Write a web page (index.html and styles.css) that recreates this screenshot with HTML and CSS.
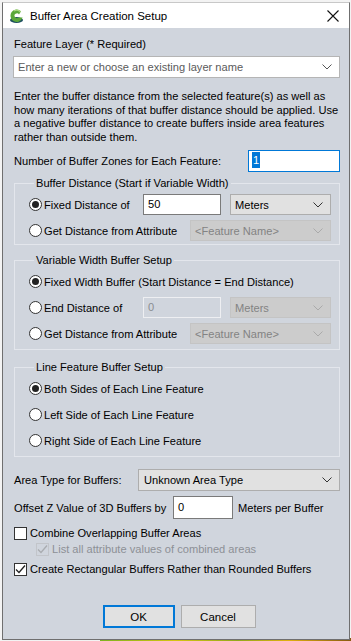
FILE: index.html
```html
<!DOCTYPE html>
<html lang="en">
<head>
    <meta charset="UTF-8">
    <title>Buffer Area Creation Setup</title>
    <link rel="stylesheet" href="styles.css">
</head>
<body>
    <div class="window">
        <div class="titlebar">
            <svg class="app-icon" width="16" height="16" viewBox="0 0 16 16">
                <ellipse cx="8.5" cy="12" rx="6.5" ry="3" fill="#1d4f5e"/>
                <path d="M13 3.2 A6.2 6.2 0 1 0 14.6 9.6 L10.4 9.6 A2.4 2.4 0 1 1 11 6.4 Z" fill="#5aa83a"/>
                <path d="M6 3 A5 5 0 0 1 12.5 4" stroke="#a8d87e" stroke-width="1.2" fill="none"/>
            </svg>
            <span class="title">Buffer Area Creation Setup</span>
            <svg class="close" width="12" height="12" viewBox="0 0 12 12">
                <path d="M0.5 0.5 L11.5 11.5 M11.5 0.5 L0.5 11.5" stroke="#111" stroke-width="1.1"/>
            </svg>
        </div>
        <div class="content">
            <div class="label-top">Feature Layer (* Required)</div>
            <div class="combo wide">
                <span class="placeholder">Enter a new or choose an existing layer name</span>
                <svg class="chev" width="10" height="6" viewBox="0 0 10 6"><path d="M0.5 0.5 L5 5 L9.5 0.5" stroke="#555" fill="none"/></svg>
            </div>
            <p class="intro">Enter the buffer distance from the selected feature(s) as well as<br>how many iterations of that buffer distance should be applied. Use<br>a negative buffer distance to create buffers inside area features<br>rather than outside them.</p>
            <div class="row zones">
                <span class="zones-label">Number of Buffer Zones for Each Feature:</span>
                <div class="textbox focused"><span class="sel">1</span></div>
            </div>

            <fieldset class="group g1">
                <legend>Buffer Distance (Start if Variable Width)</legend>
                <div class="opt">
                    <label class="radio w-short"><span class="dot on"></span>Fixed Distance of</label>
                    <div class="textbox dist">50</div>
                    <div class="combo units"><span>Meters</span>
                        <svg class="chev" width="10" height="6" viewBox="0 0 10 6"><path d="M0.5 0.5 L5 5 L9.5 0.5" stroke="#333" fill="none"/></svg>
                    </div>
                </div>
                <div class="opt">
                    <label class="radio w-long"><span class="dot"></span>Get Distance from Attribute</label>
                    <div class="combo attr disabled"><span>&lt;Feature Name&gt;</span>
                        <svg class="chev" width="10" height="6" viewBox="0 0 10 6"><path d="M0.5 0.5 L5 5 L9.5 0.5" stroke="#aaa" fill="none"/></svg>
                    </div>
                </div>
            </fieldset>

            <fieldset class="group g2">
                <legend>Variable Width Buffer Setup</legend>
                <div class="opt">
                    <label class="radio"><span class="dot on"></span>Fixed Width Buffer (Start Distance = End Distance)</label>
                </div>
                <div class="opt">
                    <label class="radio w-short"><span class="dot"></span>End Distance of</label>
                    <div class="textbox dist disabled">0</div>
                    <div class="combo units disabled"><span>Meters</span>
                        <svg class="chev" width="10" height="6" viewBox="0 0 10 6"><path d="M0.5 0.5 L5 5 L9.5 0.5" stroke="#aaa" fill="none"/></svg>
                    </div>
                </div>
                <div class="opt">
                    <label class="radio w-long"><span class="dot"></span>Get Distance from Attribute</label>
                    <div class="combo attr disabled"><span>&lt;Feature Name&gt;</span>
                        <svg class="chev" width="10" height="6" viewBox="0 0 10 6"><path d="M0.5 0.5 L5 5 L9.5 0.5" stroke="#aaa" fill="none"/></svg>
                    </div>
                </div>
            </fieldset>

            <fieldset class="group g3">
                <legend>Line Feature Buffer Setup</legend>
                <div class="opt"><label class="radio"><span class="dot on"></span>Both Sides of Each Line Feature</label></div>
                <div class="opt"><label class="radio"><span class="dot"></span>Left Side of Each Line Feature</label></div>
                <div class="opt"><label class="radio"><span class="dot"></span>Right Side of Each Line Feature</label></div>
            </fieldset>

            <div class="row area">
                <span class="area-label">Area Type for Buffers:</span>
                <div class="combo area-type"><span>Unknown Area Type</span>
                    <svg class="chev" width="10" height="6" viewBox="0 0 10 6"><path d="M0.5 0.5 L5 5 L9.5 0.5" stroke="#333" fill="none"/></svg>
                </div>
            </div>
            <div class="row offset">
                <span class="offset-label">Offset Z Value of 3D Buffers by</span>
                <div class="textbox zval">0</div>
                <span class="unit-text">Meters per Buffer</span>
            </div>

            <label class="check c1"><span class="box"></span>Combine Overlapping Buffer Areas</label>
            <label class="check c2 disabled"><span class="box checked">
                <svg width="11" height="11" viewBox="0 0 11 11"><path d="M1 5.5 L4 8.5 L10 1.5" stroke="#a9acb0" stroke-width="1.3" fill="none"/></svg>
            </span>List all attribute values of combined areas</label>
            <label class="check c3"><span class="box checked">
                <svg width="11" height="11" viewBox="0 0 11 11"><path d="M1 5.5 L4 8.5 L10 1.5" stroke="#222" stroke-width="1.3" fill="none"/></svg>
            </span>Create Rectangular Buffers Rather than Rounded Buffers</label>

            <div class="buttons">
                <button class="btn default">OK</button>
                <button class="btn cancel">Cancel</button>
            </div>
        </div>
    </div>
    <div class="map-strip"></div>
</body>
</html>
```

FILE: styles.css
```css
body {
    margin: 0;
    padding: 0;
    width: 351px;
    height: 641px;
    overflow: hidden;
    background-color: #f3f3f3;
    font-family: "Liberation Sans", Arial, sans-serif;
    font-size: 11.1px;
    color: #000;
    position: relative;
}
.window {
    margin: 2px 0 0 2px;
    width: 346px;
    height: 636px;
    border: 1px solid #6f6f6f;
    border-top-color: #c8c8c8;
    background-color: #d0d5dd;
    position: relative;
    z-index: 1;
    overflow: hidden;
}
.titlebar {
    height: 25px;
    background-color: #fff;
    display: flex;
    align-items: center;
}
.app-icon {
    margin-left: 5px;
    margin-right: 6px;
}
.title {
    flex: 1;
    font-size: 11.5px;
    color: #000;
}
.close {
    margin-right: 10px;
}
.content {
    padding: 0 9px 0 11px;
    white-space: nowrap;
}
.label-top {
    margin-top: 9px;
    line-height: 15px;
}
.combo {
    height: 21px;
    box-sizing: border-box;
    border: 1px solid #adadad;
    background-color: #e1e1e1;
    display: flex;
    align-items: center;
    justify-content: space-between;
    padding: 0 7px 0 4px;
    flex-shrink: 0;
}
.combo.wide {
    margin-top: 4px;
    margin-left: -1px;
    height: 22px;
    background-color: #fff;
    border-color: #b5b5b5;
}
.placeholder {
    color: #5a5a5a;
}
.combo.disabled {
    background-color: #cccccc;
    border-color: #c4c4c4;
    color: #838383;
}
.intro {
    margin: 12px 0 0 0;
    line-height: 13.6px;
}
.row {
    display: flex;
    align-items: center;
}
.zones {
    margin-top: 6px;
    height: 22px;
}
.zones-label {
    width: 234px;
}
.textbox {
    height: 21px;
    box-sizing: border-box;
    border: 1px solid #7a7a7a;
    background-color: #fff;
    padding: 1px 4px 0 4px;
    display: flex;
    align-items: flex-start;
    line-height: 16px;
    flex-shrink: 0;
}
.textbox.focused {
    width: 92px;
    height: 22px;
    border-color: #0078d7;
    padding-left: 3px;
}
.sel {
    background-color: #0078d7;
    color: #fff;
    padding: 0 1px;
}
.group {
    margin: 0;
    padding: 0 0 0 14px;
    border: 1px solid #e3e6ec;
    min-width: 0;
}
.group legend {
    padding: 0 2px;
    margin-left: 5px;
    line-height: 15px;
}
.g1 {
    margin-top: 4px;
    padding-top: 3px;
    padding-bottom: 3px;
}
.g2 {
    margin-top: 8px;
    padding-top: 3px;
    padding-bottom: 5px;
}
.g3 {
    margin-top: 10px;
    padding-top: 3px;
    padding-bottom: 5px;
}
.opt {
    height: 21px;
    display: flex;
    align-items: center;
}
.opt + .opt {
    margin-top: 5px;
}
.radio {
    display: flex;
    align-items: center;
    flex-shrink: 0;
}
.w-short {
    width: 114px;
}
.w-long {
    width: 161px;
}
.dot {
    width: 13px;
    height: 13px;
    box-sizing: border-box;
    border: 1px solid #333;
    border-radius: 50%;
    background-color: #fff;
    margin-right: 2px;
    display: flex;
    align-items: center;
    justify-content: center;
    flex-shrink: 0;
}
.dot.on::after {
    content: "";
    width: 7px;
    height: 7px;
    border-radius: 50%;
    background-color: #222;
}
.textbox.dist {
    width: 78px;
    margin-right: 9px;
}
.textbox.dist.disabled {
    background-color: #d0d5dd;
    border-color: #eeeff2;
    color: #8a8d92;
}
.combo.units {
    width: 101px;
}
.combo.attr {
    width: 141px;
}
.area {
    margin-top: 12px;
    height: 22px;
}
.area-label {
    width: 124px;
}
.combo.area-type {
    width: 202px;
    height: 22px;
    padding-left: 5px;
}
.offset {
    margin-top: 5px;
    height: 23px;
}
.offset-label {
    width: 159px;
}
.textbox.zval {
    width: 60px;
    height: 23px;
    padding-top: 2px;
    margin-right: 5px;
}
.check {
    display: flex;
    align-items: center;
    height: 16px;
}
.box {
    width: 13px;
    height: 13px;
    box-sizing: border-box;
    border: 1px solid #333;
    background-color: #fff;
    margin-right: 3px;
    display: flex;
    align-items: center;
    justify-content: center;
    flex-shrink: 0;
}
.c1 {
    margin-top: 6px;
}
.c2 {
    margin-left: 22px;
    color: #8d9096;
}
.c2 .box {
    border-color: #c2c5ca;
    background-color: #d0d5dd;
}
.c3 {
    margin-top: 4px;
}
.buttons {
    margin-top: 28px;
    display: flex;
    justify-content: center;
    gap: 6px;
    padding-left: 4px;
}
.btn {
    height: 23px;
    box-sizing: border-box;
    font-family: inherit;
    font-size: 11.5px;
    background-color: #e1e1e1;
    border: 1px solid #adadad;
    padding: 0;
    color: #000;
}
.btn.default {
    width: 72px;
    border: 2px solid #0078d7;
}
.btn.cancel {
    width: 75px;
}
.map-strip {
    position: absolute;
    left: 100px;
    right: 0;
    bottom: 0;
    height: 3px;
    background: linear-gradient(90deg, #7db21f, #d6c412 30%, #93a81c 55%, #e0b010 75%, #8a5a10);
}
```
